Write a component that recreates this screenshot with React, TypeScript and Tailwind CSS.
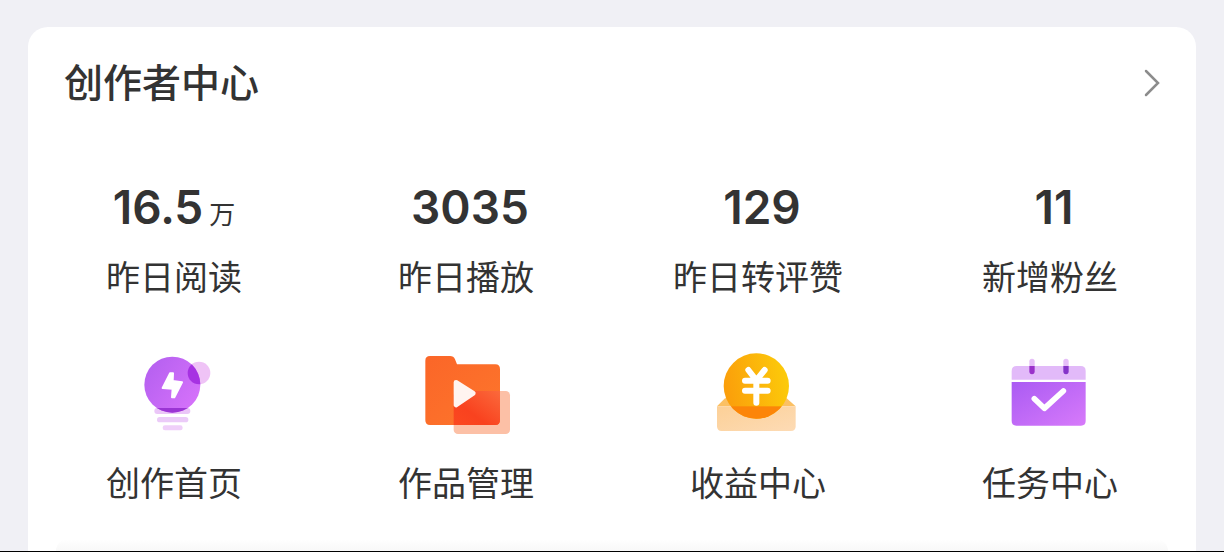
import type { ReactNode } from "react";
import clsx from "clsx";

// ─── Иконки ─────────────────────────────────────────────────────────────────

function BulbIcon() {
  return (
    <svg viewBox="-11 0 288 288" className="size-24" aria-hidden="true">
      <defs>
        <linearGradient id="bulb" x1="0" y1="0.2" x2="1" y2="0.9">
          <stop offset="0" stopColor="#b560f0" />
          <stop offset="1" stopColor="#d873fb" />
        </linearGradient>
        <clipPath id="bulbClip">
          <circle cx="128" cy="119" r="84" />
        </clipPath>
      </defs>
      <rect x="74" y="189" width="108" height="18" rx="9" fill="#ebc6f8" />
      <rect x="82" y="216" width="94" height="16" rx="8" fill="#ebcbf8" />
      <rect x="99" y="241" width="60" height="15" rx="7" fill="#efcff9" />
      <circle cx="208" cy="84" r="34" fill="#efc3f6" />
      <circle cx="128" cy="119" r="84" fill="url(#bulb)" />
      <g clipPath="url(#bulbClip)">
        <circle cx="208" cy="84" r="34" fill="#a632e2" />
        <rect x="74" y="189" width="108" height="18" fill="#9b35d4" />
      </g>
      <path
        d="M121 85 L130 85 L129 108 L157 112 L134 157 L127 157 L129 131 L99 129 Z"
        fill="#fff"
        stroke="#fff"
        strokeWidth="6"
        strokeLinejoin="round"
      />
    </svg>
  );
}

function FolderIcon() {
  return (
    <svg viewBox="10 0 288 288" className="size-24" aria-hidden="true">
      <defs>
        <linearGradient id="folder" x1="0" y1="0" x2="1" y2="1">
          <stop offset="0" stopColor="#fb6628" />
          <stop offset="1" stopColor="#fd762c" />
        </linearGradient>
        <linearGradient id="overlap" x1="0" y1="1" x2="1" y2="0">
          <stop offset="0" stopColor="#fc4a20" />
          <stop offset="0.4" stopColor="#f9421f" />
          <stop offset="1" stopColor="#fb7040" />
        </linearGradient>
        <clipPath id="folderClip">
          <path d="M46 33H106Q117 33 121 43L127 58H242Q256 58 256 72V226Q256 240 242 240H46Q32 240 32 226V47Q32 33 46 33Z" />
        </clipPath>
      </defs>
      <rect x="117" y="138" width="169" height="129" rx="13" fill="#fcc0a6" />
      <path
        d="M46 33H106Q117 33 121 43L127 58H242Q256 58 256 72V226Q256 240 242 240H46Q32 240 32 226V47Q32 33 46 33Z"
        fill="url(#folder)"
      />
      <rect
        x="117"
        y="138"
        width="169"
        height="129"
        rx="13"
        fill="url(#overlap)"
        clipPath="url(#folderClip)"
      />
      <path
        d="M124 112 L176 145 L124 180 Z"
        fill="#fff4f0"
        stroke="#fff4f0"
        strokeWidth="14"
        strokeLinejoin="round"
      />
    </svg>
  );
}

function CoinIcon() {
  return (
    <svg viewBox="15 0 288 288" className="size-24" aria-hidden="true">
      <defs>
        <linearGradient id="coin" x1="0" y1="0.6" x2="1" y2="0.4">
          <stop offset="0" stopColor="#fb9d0b" />
          <stop offset="1" stopColor="#fccb0a" />
        </linearGradient>
        <linearGradient id="tray" x1="0" y1="0" x2="1" y2="1">
          <stop offset="0" stopColor="#fcd097" />
          <stop offset="1" stopColor="#fddbb5" />
        </linearGradient>
        <clipPath id="coinClip">
          <circle cx="154" cy="123" r="98" />
        </clipPath>
      </defs>
      <path d="M60 160 L36 184 H272 L245 160 Z" fill="#fbc063" />
      <path d="M36 184H272V244Q272 258 258 258H50Q36 258 36 244Z" fill="url(#tray)" />
      <circle cx="154" cy="123" r="98" fill="url(#coin)" />
      <rect x="36" y="184" width="236" height="74" fill="#fc8508" clipPath="url(#coinClip)" />
      <path
        d="M130 75 L154 106 L179 75 M154 104 V173 M120 107 H188 M120 137 H188"
        fill="none"
        stroke="#fff"
        strokeWidth="18"
        strokeLinecap="round"
        strokeLinejoin="round"
      />
    </svg>
  );
}

function CalendarIcon() {
  return (
    <svg viewBox="6 0 288 288" className="size-24" aria-hidden="true">
      <defs>
        <linearGradient id="calendar" x1="0" y1="0" x2="1" y2="1">
          <stop offset="0" stopColor="#aa5bf3" />
          <stop offset="1" stopColor="#d77afa" />
        </linearGradient>
      </defs>
      <rect x="88" y="41" width="16" height="46" rx="8" fill="#e6bff8" />
      <rect x="190" y="41" width="16" height="46" rx="8" fill="#e6bff8" />
      <path d="M50 63H242Q257 63 257 78V104H35V78Q35 63 50 63Z" fill="#e2baf9" />
      <path d="M88 63H104V79Q104 88 96 88Q88 88 88 79Z" fill="#9a32ca" />
      <path d="M190 63H206V79Q206 88 198 88Q190 88 190 79Z" fill="#8534c9" />
      <path d="M35 111H257V228Q257 242 243 242H49Q35 242 35 228Z" fill="url(#calendar)" />
      <path
        d="M103 161 L133 190 L190 138"
        fill="none"
        stroke="#fff"
        strokeWidth="17"
        strokeLinecap="round"
        strokeLinejoin="round"
      />
    </svg>
  );
}

// ─── Данные ─────────────────────────────────────────────────────────────────

interface Stat {
  value: string;
  unit?: string;
  label: string;
}

const stats: Stat[] = [
  { value: "16.5", unit: "万", label: "昨日阅读" },
  { value: "3035", label: "昨日播放" },
  { value: "129", label: "昨日转评赞" },
  { value: "11", label: "新增粉丝" },
];

const shortcuts: { label: string; icon: ReactNode }[] = [
  { label: "创作首页", icon: <BulbIcon /> },
  { label: "作品管理", icon: <FolderIcon /> },
  { label: "收益中心", icon: <CoinIcon /> },
  { label: "任务中心", icon: <CalendarIcon /> },
];

// ─── Страница ───────────────────────────────────────────────────────────────

export default function App() {
  return (
    <div className="flex min-h-screen flex-col border-b border-black bg-[#f0f0f5] px-7 pt-[27px] font-['Inter','Noto_Sans_CJK_SC',sans-serif] text-[#333333]">
      <section className="flex flex-1 flex-col rounded-t-[20px] bg-white">
        <header className="flex h-28 items-center justify-between px-9">
          <h1 className="text-[39px] leading-12 font-medium">创作者中心</h1>
          <button type="button" aria-label="更多" className="flex items-center">
            <svg viewBox="0 0 16 28" className="h-7 w-4" aria-hidden="true">
              <path
                d="M2 2 L14 14 L2 26"
                fill="none"
                stroke="#8c8c8c"
                strokeWidth="2.5"
                strokeLinecap="round"
              />
            </svg>
          </button>
        </header>

        <div className="grid grid-cols-4 pt-10">
          {stats.map((stat) => (
            <a key={stat.label} href="#" className="flex flex-col items-center gap-[19px]">
              <span
                className={clsx(
                  "flex h-14 items-baseline gap-1.5 text-[46px] leading-14 font-semibold",
                  !stat.unit && "pl-2",
                )}
              >
                {stat.value}
                {stat.unit && <span className="text-[26px] font-normal">{stat.unit}</span>}
              </span>
              <span className="text-[34px] leading-12">{stat.label}</span>
            </a>
          ))}
        </div>

        <nav className="grid grid-cols-4 pt-[43px]">
          {shortcuts.map((item) => (
            <a key={item.label} href="#" className="flex flex-col items-center gap-[19px]">
              {item.icon}
              <span className="text-[34px] leading-12">{item.label}</span>
            </a>
          ))}
        </nav>

        <div className="mx-7 mt-auto h-3 rounded-t-xl bg-gradient-to-b from-white to-[#f8f8f8]" />
      </section>
    </div>
  );
}
